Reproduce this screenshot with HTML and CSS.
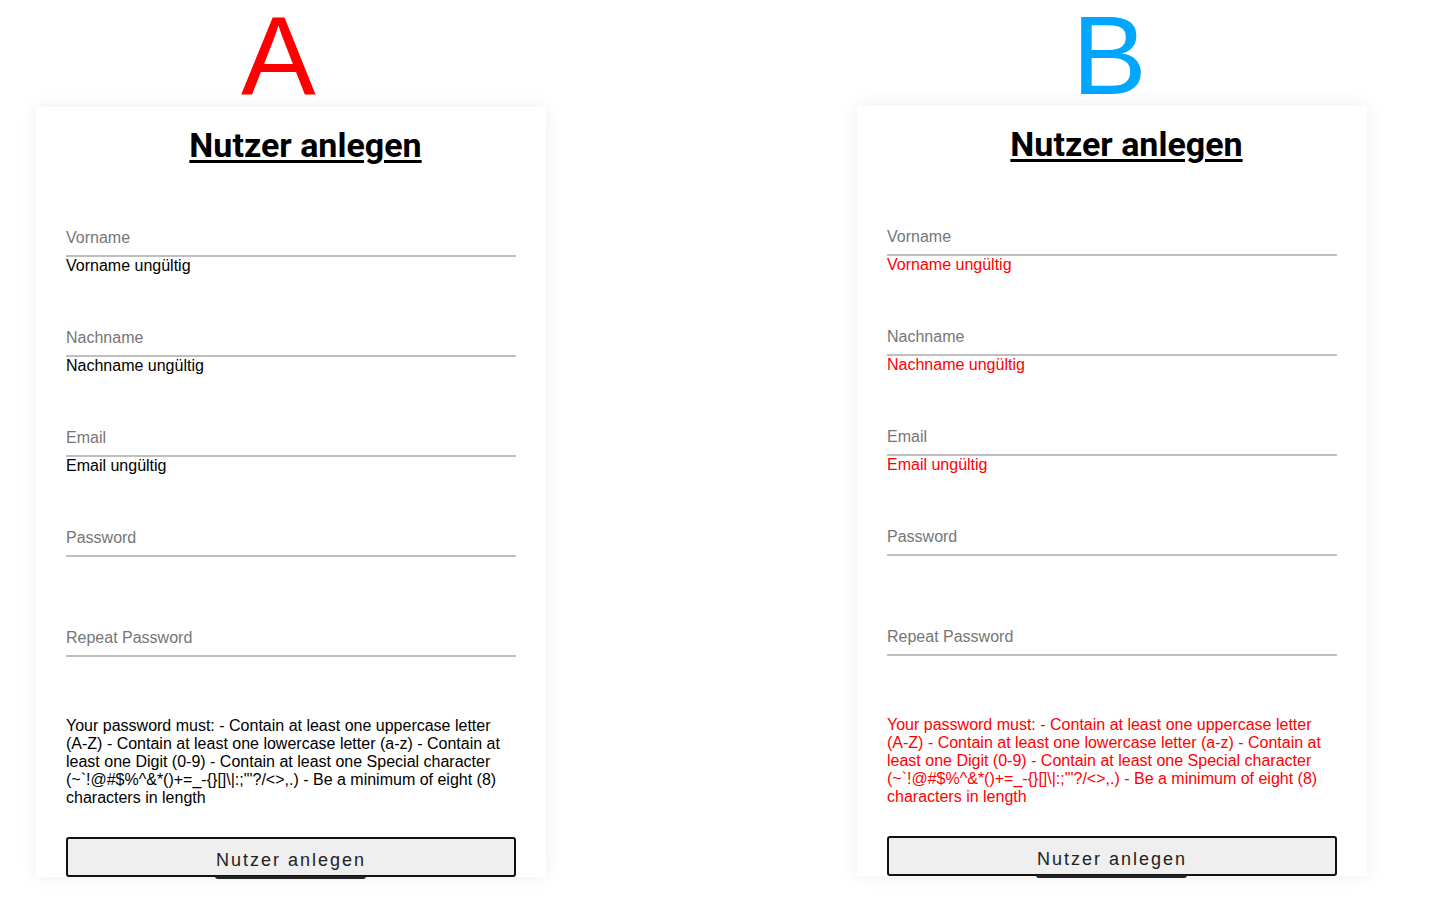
FILE: index.html
```html
<!DOCTYPE html>
<html lang="de">
<head>
<meta charset="utf-8">
<title>Nutzer anlegen</title>
<link rel="stylesheet" href="styles.css">
</head>
<body>
<main class="compare">
  <section class="variant variant-a">
    <div class="variant-label label-a">A</div>
    <form class="card">
      <h1 class="card-title">Nutzer anlegen</h1>
      <div class="fields">
        <div class="field">
          <div class="field-input">Vorname</div>
          <div class="field-error">Vorname ungültig</div>
        </div>
        <div class="field">
          <div class="field-input">Nachname</div>
          <div class="field-error">Nachname ungültig</div>
        </div>
        <div class="field">
          <div class="field-input">Email</div>
          <div class="field-error">Email ungültig</div>
        </div>
        <div class="field">
          <div class="field-input">Password</div>
          <div class="field-error"></div>
        </div>
        <div class="field field-last">
          <div class="field-input">Repeat Password</div>
          <div class="field-error"></div>
        </div>
      </div>
      <p class="hint">Your password must: - Contain at least one uppercase letter (A-Z) - Contain at least one lowercase letter (a-z) - Contain at least one Digit (0-9) - Contain at least one Special character (~`!@#$%^&amp;*()+=_-{}[]\|:;"'?/&lt;&gt;,.) - Be a minimum of eight (8) characters in length</p>
      <div class="submit-wrap">
        <button type="button" class="submit">Nutzer anlegen</button>
      </div>
    </form>
  </section>

  <section class="variant variant-b">
    <div class="variant-label label-b">B</div>
    <form class="card card-error">
      <h1 class="card-title">Nutzer anlegen</h1>
      <div class="fields">
        <div class="field">
          <div class="field-input">Vorname</div>
          <div class="field-error">Vorname ungültig</div>
        </div>
        <div class="field">
          <div class="field-input">Nachname</div>
          <div class="field-error">Nachname ungültig</div>
        </div>
        <div class="field">
          <div class="field-input">Email</div>
          <div class="field-error">Email ungültig</div>
        </div>
        <div class="field">
          <div class="field-input">Password</div>
          <div class="field-error"></div>
        </div>
        <div class="field field-last">
          <div class="field-input">Repeat Password</div>
          <div class="field-error"></div>
        </div>
      </div>
      <p class="hint">Your password must: - Contain at least one uppercase letter (A-Z) - Contain at least one lowercase letter (a-z) - Contain at least one Digit (0-9) - Contain at least one Special character (~`!@#$%^&amp;*()+=_-{}[]\|:;"'?/&lt;&gt;,.) - Be a minimum of eight (8) characters in length</p>
      <div class="submit-wrap">
        <button type="button" class="submit">Nutzer anlegen</button>
      </div>
    </form>
  </section>
</main>
</body>
</html>
```

FILE: styles.css
```css
* {
  box-sizing: border-box;
}

html, body {
  margin: 0;
  padding: 0;
  background: #ffffff;
}

body {
  font-family: "Liberation Sans", Arial, sans-serif;
  color: #000000;
  width: 1440px;
  height: 900px;
  overflow: hidden;
}

.compare {
  display: flex;
  gap: 311px;
  padding-left: 36px;
}

.variant {
  width: 510px;
  display: flex;
  flex-direction: column;
}

.variant-label {
  font-family: "Liberation Sans", Arial, sans-serif;
  font-size: 112px;
  line-height: 112px;
  height: 107px;
  white-space: nowrap;
}

.label-a {
  color: #ff0000;
  padding-left: 205px;
}

.label-b {
  color: #00a6ff;
  padding-left: 215px;
  height: 106px;
}

.card {
  width: 510px;
  height: 770px;
  background: #ffffff;
  box-shadow: 0 0 18px rgba(0, 0, 0, 0.07);
  padding: 0 30px;
  display: flex;
  flex-direction: column;
}

.card-title {
  margin: 19px 0 0;
  padding-left: 29px;
  text-align: center;
  font-family: Roboto, "Liberation Sans", sans-serif;
  font-weight: 700;
  font-size: 34px;
  line-height: 38px;
  text-decoration: underline;
  text-decoration-thickness: 3px;
  text-underline-offset: 3px;
  color: #000000;
}

.fields {
  margin-top: 64px;
  display: flex;
  flex-direction: column;
}

.field {
  margin-bottom: 53px;
}

.field-last {
  margin-bottom: 42px;
}

.field-input {
  font-size: 16px;
  line-height: 18px;
  color: #767676;
  padding-top: 1px;
  padding-bottom: 8px;
  border-bottom: 2px solid #bfbfbf;
}

.field-error {
  font-size: 16px;
  line-height: 18px;
  min-height: 18px;
  color: #000000;
}

.hint {
  margin: 0;
  font-size: 16px;
  line-height: 18px;
  color: #000000;
}

.card-error .field-error,
.card-error .hint {
  color: #ff0000;
}

.submit-wrap {
  position: relative;
  margin-top: 30px;
}

.submit {
  display: block;
  width: 100%;
  height: 40px;
  margin: 0;
  padding: 6px 0 0;
  background: #efefef;
  border: 2px solid #111111;
  border-radius: 3px;
  font-family: "Liberation Sans", Arial, sans-serif;
  font-size: 18px;
  line-height: 20px;
  letter-spacing: 2px;
  color: #222222;
}

.submit-wrap::after {
  content: "";
  position: absolute;
  left: 149px;
  top: 39px;
  width: 151px;
  height: 3px;
  background: #222222;
  border-radius: 0 0 3px 3px;
}
```
